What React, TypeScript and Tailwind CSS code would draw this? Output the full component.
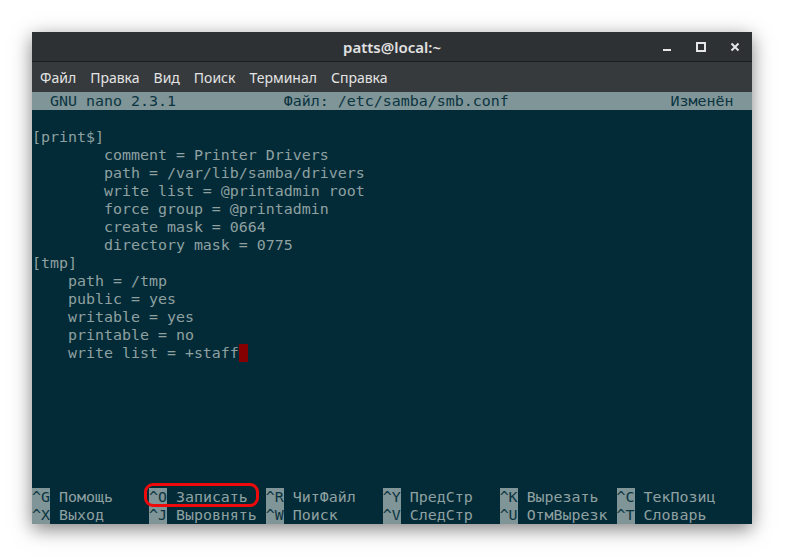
const lines: string[] = [
  "",
  "[print$]",
  "        comment = Printer Drivers",
  "        path = /var/lib/samba/drivers",
  "        write list = @printadmin root",
  "        force group = @printadmin",
  "        create mask = 0664",
  "        directory mask = 0775",
  "[tmp]",
  "    path = /tmp",
  "    public = yes",
  "    writable = yes",
  "    printable = no",
];

const shortcuts: [string, string][][] = [
  [
    ["^G", "Помощь"],
    ["^O", "Записать"],
    ["^R", "ЧитФайл"],
    ["^Y", "ПредСтр"],
    ["^K", "Вырезать"],
    ["^C", "ТекПозиц"],
  ],
  [
    ["^X", "Выход"],
    ["^J", "Выровнять"],
    ["^W", "Поиск"],
    ["^V", "СледСтр"],
    ["^U", "ОтмВырезк"],
    ["^T", "Словарь"],
  ],
];

const menu = ["Файл", "Правка", "Вид", "Поиск", "Терминал", "Справка"];

function TitleBar() {
  return (
    <div className="grid h-[30px] grid-cols-[1fr_auto_1fr] items-center border-b border-[#1c1f21] bg-[#2d3134]">
      <div />
      <span className="font-['Noto_Sans',sans-serif] text-[15px] font-semibold text-[#e2e2e2]">
        patts@local:~
      </span>
      <div className="flex justify-end">
        <button className="flex h-[30px] w-[34px] items-center justify-center">
          <svg width="10" height="10" viewBox="0 0 10 10">
            <rect x="1" y="7" width="8" height="2" fill="#e6e6e6" />
          </svg>
        </button>
        <button className="flex h-[30px] w-[34px] items-center justify-center">
          <svg width="10" height="10" viewBox="0 0 10 10">
            <rect x="1" y="1" width="8" height="8" fill="none" stroke="#e6e6e6" strokeWidth="2" />
          </svg>
        </button>
        <button className="flex h-[30px] w-[34px] items-center justify-center">
          <svg width="10" height="10" viewBox="0 0 10 10">
            <path d="M1.5 1.5 L8.5 8.5 M8.5 1.5 L1.5 8.5" stroke="#e6e6e6" strokeWidth="2" />
          </svg>
        </button>
      </div>
    </div>
  );
}

function MenuBar() {
  return (
    <div className="flex h-[30px] items-center gap-[14px] bg-[#363a3d] pl-[8px] font-['Noto_Sans',sans-serif] text-[14px] text-[#e4e4e4]">
      {menu.map((item) => (
        <span key={item}>{item}</span>
      ))}
    </div>
  );
}

export default function App() {
  return (
    <div className="h-[557px] w-[785px] bg-white pl-[32px] pt-[32px]">
      <div className="relative w-[720px] overflow-hidden shadow-[0_5px_18px_rgba(0,0,0,0.5)]">
        <TitleBar />
        <MenuBar />
        <div className="bg-[#022b37] font-['DejaVu_Sans_Mono',monospace] text-[14.95px] leading-[18px] whitespace-pre text-[#8fa0a1]">
          <div className="bg-[#7f9597] text-[#0b3441]">
            {"  GNU nano 2.3.1            Файл: /etc/samba/smb.conf                  Изменён  "}
          </div>
          {lines.map((line, i) => (
            <div key={i} className="h-[18px]">
              {line}
            </div>
          ))}
          <div className="h-[18px]">
            {"    write list = +staff"}
            <span className="inline-block h-[18px] w-[1ch] bg-[#850000] align-top" />
          </div>
          {Array.from({ length: 7 }).map((_, i) => (
            <div key={i} className="h-[18px]" />
          ))}
          {shortcuts.map((row, r) => (
            <div key={r} className="flex h-[18px]">
              {row.map(([key, label]) => (
                <span key={key} className="w-[13ch]">
                  <span className="bg-[#7f9597] text-[#0b3441]">{key}</span> {label}
                </span>
              ))}
            </div>
          ))}
        </div>
        <div className="absolute left-[112px] top-[451px] h-[24px] w-[115px] rounded-[9px] border-[3px] border-[#ee0a0a]" />
      </div>
    </div>
  );
}
